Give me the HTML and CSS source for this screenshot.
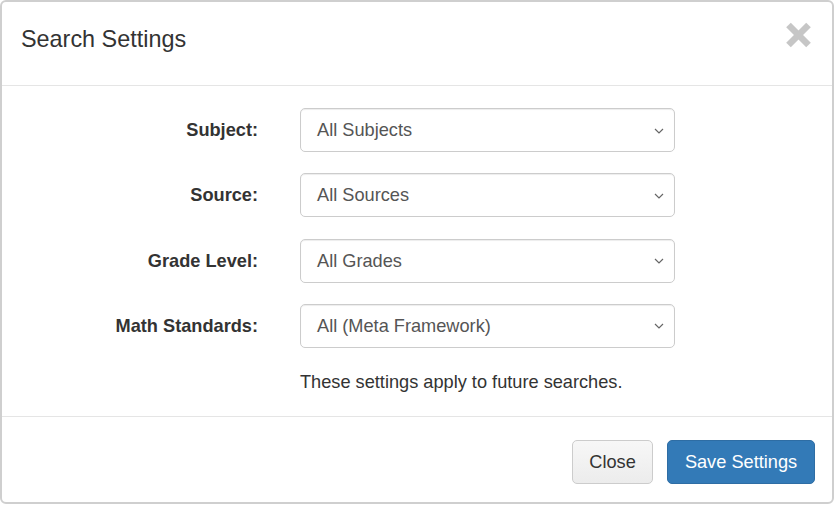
FILE: index.html
```html
<!DOCTYPE html>
<html>
<head>
<meta charset="utf-8">
<link rel="stylesheet" href="styles.css">
</head>
<body>
<div class="modal">
  <div class="modal-header">
    <h4 class="modal-title">Search Settings</h4>
    <button class="close" type="button" aria-label="Close">
      <svg width="27" height="26" viewBox="0 0 27 26">
        <line x1="3.5" y1="3" x2="23.5" y2="23" stroke="#c6c6c6" stroke-width="6.5"/>
        <line x1="23.5" y1="3" x2="3.5" y2="23" stroke="#c6c6c6" stroke-width="6.5"/>
      </svg>
    </button>
  </div>
  <div class="modal-body">
    <div class="form-row">
      <label class="control-label">Subject:</label>
      <div class="select"><span>All Subjects</span><svg class="chev" width="10" height="6" viewBox="0 0 10 6"><path d="M1 1 L5 5 L9 1" fill="none" stroke="#666" stroke-width="1.2"/></svg></div>
    </div>
    <div class="form-row">
      <label class="control-label">Source:</label>
      <div class="select"><span>All Sources</span><svg class="chev" width="10" height="6" viewBox="0 0 10 6"><path d="M1 1 L5 5 L9 1" fill="none" stroke="#666" stroke-width="1.2"/></svg></div>
    </div>
    <div class="form-row">
      <label class="control-label">Grade Level:</label>
      <div class="select"><span>All Grades</span><svg class="chev" width="10" height="6" viewBox="0 0 10 6"><path d="M1 1 L5 5 L9 1" fill="none" stroke="#666" stroke-width="1.2"/></svg></div>
    </div>
    <div class="form-row">
      <label class="control-label">Math Standards:</label>
      <div class="select"><span>All (Meta Framework)</span><svg class="chev" width="10" height="6" viewBox="0 0 10 6"><path d="M1 1 L5 5 L9 1" fill="none" stroke="#666" stroke-width="1.2"/></svg></div>
    </div>
    <div class="form-row">
      <div></div>
      <p class="help">These settings apply to future searches.</p>
    </div>
  </div>
  <div class="modal-footer">
    <button class="btn btn-default" type="button">Close</button>
    <button class="btn btn-primary" type="button">Save Settings</button>
  </div>
</div>
</body>
</html>
```
FILE: styles.css
```css
html, body {
  margin: 0;
  padding: 0;
  background: #ffffff;
}
body {
  font-family: "Liberation Sans", Arial, sans-serif;
  font-size: 18.2px;
  line-height: 26px;
  color: #333333;
}
.modal {
  box-sizing: border-box;
  width: 834px;
  height: 504px;
  border: 2px solid #cfcfcf;
  border-radius: 6px;
  background: #ffffff;
  display: flex;
  flex-direction: column;
}
.modal-header {
  box-sizing: border-box;
  height: 84px;
  padding: 21px 20px 0 19px;
  border-bottom: 1px solid #e5e5e5;
  display: flex;
  justify-content: space-between;
  align-items: flex-start;
}
.modal-title {
  margin: 0;
  font-size: 23.4px;
  line-height: 33.4px;
  font-weight: normal;
  color: #333333;
}
.close {
  border: 0;
  background: transparent;
  padding: 0;
  margin: -1px 0 0 0;
  width: 27px;
  height: 26px;
  display: block;
}
.modal-body {
  flex: 1;
  padding: 22px 0 0 0;
  display: flex;
  flex-direction: column;
  gap: 21.3px;
}
.form-row {
  display: grid;
  grid-template-columns: 256px 375px;
  column-gap: 42px;
  align-items: center;
}
.control-label {
  text-align: right;
  font-weight: bold;
  color: #333333;
}
.select {
  box-sizing: border-box;
  height: 44px;
  border: 1px solid #cccccc;
  border-radius: 5px;
  box-shadow: inset 0 1px 1px rgba(0,0,0,.075);
  padding: 0 10px 0 16px;
  display: flex;
  align-items: center;
  justify-content: space-between;
  color: #555555;
}
.chev {
  display: block;
  margin-top: 1px;
}
.help {
  margin: 0;
  color: #333333;
}
.modal-footer {
  box-sizing: border-box;
  height: 86px;
  border-top: 1px solid #e5e5e5;
  padding: 23px 17px 0 0;
  display: flex;
  justify-content: flex-end;
  align-items: flex-start;
  gap: 14px;
}
.btn {
  box-sizing: border-box;
  height: 44px;
  border-radius: 5px;
  font-family: "Liberation Sans", Arial, sans-serif;
  font-size: 18.2px;
  line-height: 26px;
  padding: 0;
  white-space: nowrap;
  text-align: center;
  cursor: pointer;
}
.btn-default {
  width: 81px;
  background: linear-gradient(#f7f7f7, #ececec);
  border: 1px solid #cccccc;
  color: #333333;
}
.btn-primary {
  width: 148px;
  background: #337ab7;
  border: 1px solid #2e6da4;
  color: #ffffff;
}
```
